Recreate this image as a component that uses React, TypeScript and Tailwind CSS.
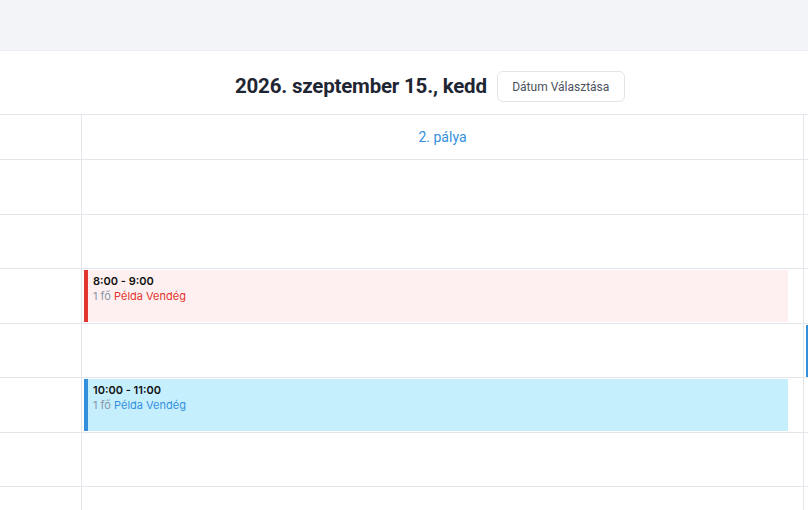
import React from 'react';

interface Booking {
  slot: number;
  time: string;
  guests: string;
  name: string;
  tone: 'red' | 'blue';
}

const slots = [0, 1, 2, 3, 4, 5, 6];

const bookings: Booking[] = [
  { slot: 2, time: '8:00 - 9:00', guests: '1 fő', name: 'Példa Vendég', tone: 'red' },
  { slot: 4, time: '10:00 - 11:00', guests: '1 fő', name: 'Példa Vendég', tone: 'blue' },
];

const toneClasses = {
  red: { box: 'bg-[#fef0f0] border-[#e3342f]', name: 'text-[#e3342f]' },
  blue: { box: 'bg-[#c6effe] border-[#3490dc]', name: 'text-[#3490dc]' },
};

const BookingCard: React.FC<{ booking: Booking }> = ({ booking }) => {
  const tone = toneClasses[booking.tone];
  return (
    <div
      className={`absolute left-[2px] right-[15px] top-[1px] h-[52px] border-l-[4px] pl-[5px] pt-[4px] text-[11px] leading-[15px] ${tone.box}`}
      style={{ fontFamily: 'Inter, sans-serif' }}
    >
      <div className="font-semibold text-[#111]">{booking.time}</div>
      <div>
        <span className="text-[#8795a8]">{booking.guests}</span>{' '}
        <span className={tone.name}>{booking.name}</span>
      </div>
    </div>
  );
};

export default function App() {
  return (
    <div
      className="w-[808px] h-[510px] overflow-hidden bg-white"
      style={{ fontFamily: 'Roboto, "Noto Sans", sans-serif' }}
    >
      {/* Top bar */}
      <div className="h-[50px] bg-[#f3f4f8]" />

      {/* Date header */}
      <div className="h-[65px] flex items-center pt-[8px] pl-[235px] gap-[10px] border-b border-t border-t-[#eceef3] border-b-[#e5e5ec]">
        <h1 className="text-[20.5px] font-bold text-[#1f2633] tracking-[-0.2px]">
          2026. szeptember 15., kedd
        </h1>
        <button className="h-[31px] w-[128px] rounded-md border border-[#e2e4ea] bg-white text-[12px] text-[#4b5260]">
          Dátum Választása
        </button>
      </div>

      {/* Grid */}
      <div className="flex w-[1000px]">
        <div className="w-[82px] border-r border-[#e5e5ec]">
          <div className="h-[45px] border-b border-[#e5e5ec]" />
          {slots.map((s) => (
            <div key={s} className="h-[54.5px] border-b border-[#e5e5ec]" />
          ))}
        </div>
        <div className="w-[722px] border-r border-[#e5e5ec]">
          <div className="h-[45px] border-b border-[#e5e5ec] flex items-center justify-center text-[14px] text-[#3490dc]">
            2. pálya
          </div>
          {slots.map((s) => {
            const booking = bookings.find((b) => b.slot === s);
            return (
              <div key={s} className="relative h-[54.5px] border-b border-[#e5e5ec]">
                {booking && <BookingCard booking={booking} />}
              </div>
            );
          })}
        </div>
        <div className="w-[196px]">
          <div className="h-[45px] border-b border-[#e5e5ec]" />
          {slots.map((s) => (
            <div key={s} className="relative h-[54.5px] border-b border-[#e5e5ec]">
              {s === 3 && (
                <div className="absolute left-[2px] top-[1px] h-[52px] w-[100px] border-l-[4px] border-[#3490dc] bg-[#c6effe]" />
              )}
            </div>
          ))}
        </div>
      </div>
    </div>
  );
}
